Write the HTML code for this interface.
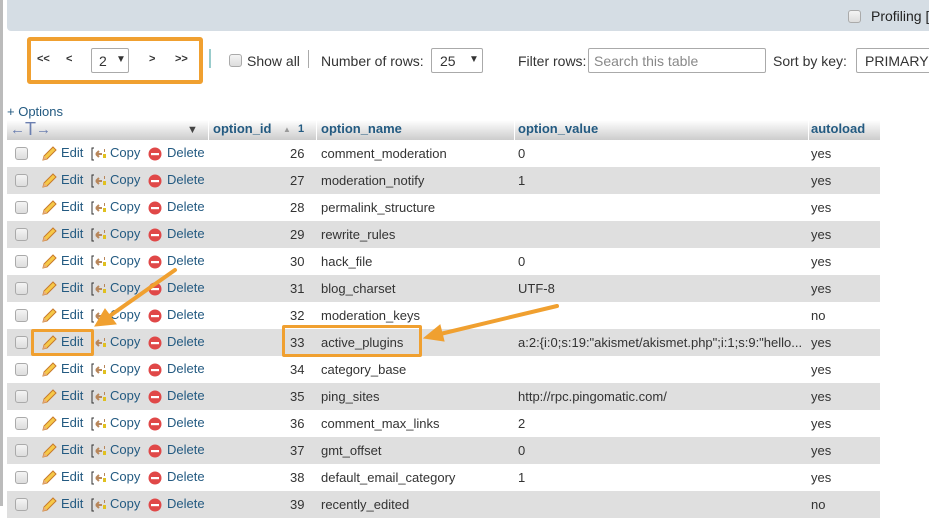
<!DOCTYPE html>
<html><head><style>
*{margin:0;padding:0;box-sizing:border-box}
body{width:929px;height:506px;overflow:hidden;background:#fff;font-family:"Liberation Sans",Arial,sans-serif;font-size:13px;color:#333;position:relative;white-space:nowrap}
.a{position:absolute;white-space:nowrap}
.cb{position:absolute;width:13px;height:13px;border:1px solid #aaa;border-radius:3px;background:linear-gradient(#f4f4f4,#ddd)}
.lnk{color:#235a81}
.row{position:absolute;left:7px;width:873px;height:27px}
.row span{position:absolute;top:6px;white-space:nowrap}
.g{background:#dfdfdf}
.sel{position:absolute;border:1px solid #aaa;border-radius:2px;background:#fff;height:25px;overflow:hidden}
</style></head><body>
<div class="a" style="left:0;top:0;width:3px;height:506px;background:#bbb"></div>
<div class="a" style="left:7px;top:0;width:922px;height:31px;background:#d5dde4;border-bottom-left-radius:4px"></div>
<div class="cb" style="left:848px;top:10px"></div>
<div class="a" style="left:871px;top:8px;font-size:14px;color:#222">Profiling [E</div>

<div class="a" style="left:27px;top:37px;width:176px;height:47px;border:4px solid #f0a030;border-radius:3px"></div>
<div class="a" style="left:37px;top:53px;font-size:11px;font-weight:bold">&lt;&lt;</div>
<div class="a" style="left:66px;top:53px;font-size:11px;font-weight:bold">&lt;</div>
<div class="sel" style="left:91px;top:48px;width:38px"><span class="a" style="left:7px;top:4px;font-size:14px">2</span><span class="a" style="left:24px;top:5px;font-size:10px">▼</span></div>
<div class="a" style="left:149px;top:53px;font-size:11px;font-weight:bold">&gt;</div>
<div class="a" style="left:175px;top:53px;font-size:11px;font-weight:bold">&gt;&gt;</div>
<div class="a" style="left:209px;top:49px;width:2px;height:19px;background:#9cc"></div>
<div class="cb" style="left:229px;top:54px"></div>
<div class="a" style="left:247px;top:53px;font-size:14px">Show all</div>
<div class="a" style="left:308px;top:50px;width:1px;height:18px;background:#aaa"></div>
<div class="a" style="left:321px;top:53px;font-size:14px">Number of rows:</div>
<div class="sel" style="left:431px;top:48px;width:52px"><span class="a" style="left:8px;top:4px;font-size:14px">25</span><span class="a" style="left:37px;top:5px;font-size:10px">▼</span></div>
<div class="a" style="left:518px;top:53px;font-size:14px">Filter rows:</div>
<div class="a" style="left:588px;top:48px;width:178px;height:25px;border:1px solid #aaa;border-radius:2px"><span class="a" style="left:5px;top:4px;font-size:14px;color:#888">Search this table</span></div>
<div class="a" style="left:773px;top:53px;font-size:14px">Sort by key:</div>
<div class="sel" style="left:856px;top:48px;width:80px"><span class="a" style="left:8px;top:4px;font-size:14px">PRIMARY (</span></div>

<div class="a" style="left:7px;top:104px;font-size:13px;color:#235a81">+ Options</div>
<div class="a" style="left:7px;top:120px;width:873px;height:20px;background:linear-gradient(#fff,#ccc)"></div>
<div class="a" style="left:10px;top:118px;color:#6b7fb0;font-size:15px">←<span style="font-size:18px;position:relative;top:1px">T</span>→</div>
<div class="a" style="left:187px;top:124px;font-size:11px;color:#444">▼</div>
<div class="a" style="left:208px;top:120px;width:1px;height:20px;background:#fff"></div>
<div class="a" style="left:316px;top:120px;width:1px;height:20px;background:#fff"></div>
<div class="a" style="left:514px;top:120px;width:1px;height:20px;background:#fff"></div>
<div class="a" style="left:808px;top:120px;width:1px;height:20px;background:#fff"></div>
<div class="a lnk" style="left:213px;top:121px;font-weight:bold;font-size:13px">option_id</div>
<div class="a" style="left:283px;top:125px;font-size:8px;color:#999">▲</div>
<div class="a lnk" style="left:298px;top:123px;font-weight:bold;font-size:11px">1</div>
<div class="a lnk" style="left:321px;top:121px;font-weight:bold">option_name</div>
<div class="a lnk" style="left:518px;top:121px;font-weight:bold">option_value</div>
<div class="a lnk" style="left:811px;top:121px;font-weight:bold">autoload</div>

<div id="rows"></div>
<script>
var d=[[26,"comment_moderation","0","yes"],[27,"moderation_notify","1","yes"],[28,"permalink_structure","","yes"],[29,"rewrite_rules","","yes"],[30,"hack_file","0","yes"],[31,"blog_charset","UTF-8","yes"],[32,"moderation_keys","","no"],[33,"active_plugins","a:2:{i:0;s:19:\"akismet/akismet.php\";i:1;s:9:\"hello...","yes"],[34,"category_base","","yes"],[35,"ping_sites","http://rpc.pingomatic.com/","yes"],[36,"comment_max_links","2","yes"],[37,"gmt_offset","0","yes"],[38,"default_email_category","1","yes"],[39,"recently_edited","","no"]];
var pen='<svg width="16" height="16" viewBox="0 0 16 16" style="position:absolute;left:34px;top:6px"><path d="M2 14l1-4 9-9 3 3-9 9z" fill="#f6c948" stroke="#c8792a" stroke-width="1"/><path d="M2 14l1-4 3 3z" fill="#e8b080"/></svg>';
var cp='<svg width="16" height="14" viewBox="0 0 16 14" style="position:absolute;left:84px;top:7px"><path d="M3 1H1v12h2" fill="none" stroke="#333"/><path d="M5 7h6M5 7l3-3M5 7l3 3" stroke="#b8865a" stroke-width="2" fill="none"/><rect x="12" y="7" width="3" height="4" fill="#e0c020"/><rect x="13" y="2" width="1" height="3" fill="#b8865a"/></svg>';
var del='<svg width="14" height="14" viewBox="0 0 14 14" style="position:absolute;left:141px;top:7px"><circle cx="7" cy="7" r="6.5" fill="#e04848"/><rect x="3" y="6" width="8" height="2.2" fill="#fff"/></svg>';
var h='';
d.forEach(function(r,i){
h+='<div class="row'+(i%2?' g':'')+'" style="top:'+(140+i*27)+'px"><div class="cb" style="left:8px;top:7px"></div>'+pen+'<span class="lnk" style="left:54px;top:5px">Edit</span>'+cp+'<span class="lnk" style="left:103px;top:5px">Copy</span>'+del+'<span class="lnk" style="left:160px;top:5px">Delete</span><span style="left:283px">'+r[0]+'</span><span style="left:314px">'+r[1]+'</span><span style="left:511px">'+r[2]+'</span><span style="left:804px">'+r[3]+'</span></div>';
});
document.getElementById('rows').innerHTML=h;
</script>
<div class="a" style="left:31px;top:329px;width:63px;height:27px;border:3px solid #f0a030;border-radius:2px"></div>
<div class="a" style="left:282px;top:325px;width:140px;height:32px;border:3px solid #f0a030;border-radius:2px"></div>
<svg class="a" style="left:0;top:0" width="929" height="506">
<g stroke="#f0a030" stroke-width="4" fill="#f0a030" stroke-linecap="round">
<line x1="175" y1="270" x2="104" y2="320"/>
<polygon points="95,326 105,309 116,324" stroke-width="1"/>
<line x1="557" y1="306" x2="436" y2="335"/>
<polygon points="424,338 440,325 444,341" stroke-width="1"/>
</g></svg>
</body></html>
